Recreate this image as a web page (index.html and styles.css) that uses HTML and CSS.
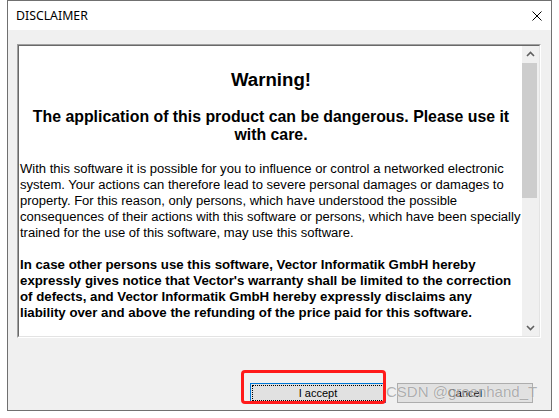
FILE: index.html
```html
<!DOCTYPE html>
<html>
<head>
<meta charset="utf-8">
<link rel="stylesheet" href="styles.css">
</head>
<body>
<div class="window">
  <div class="titlebar">
    <span class="title">DISCLAIMER</span>
    <svg class="close" width="10" height="10" viewBox="0 0 10 10"><path d="M0.5 0.5 L9.5 9.5 M9.5 0.5 L0.5 9.5" stroke="#000" stroke-width="1" fill="none"/></svg>
  </div>
  <div class="client">
    <div class="edit">
      <div class="edit-inner">
        <div class="doc">
          <h1 class="doc-title">Warning!</h1>
          <h2 class="doc-sub">The application of this product can be dangerous. Please use it<br>with care.</h2>
          <p class="para">With this software it is possible for you to influence or control a networked electronic<br>system. Your actions can therefore lead to severe personal damages or damages to<br>property. For this reason, only persons, which have understood the possible<br>consequences of their actions with this software or persons, which have been specially<br>trained for the use of this software, may use this software.</p>
          <p class="para bold">In case other persons use this software, Vector Informatik GmbH hereby<br>expressly gives notice that Vector's warranty shall be limited to the correction<br>of defects, and Vector Informatik GmbH hereby expressly disclaims any<br>liability over and above the refunding of the price paid for this software.</p>
        </div>
        <div class="scrollbar">
          <svg class="arrow" width="17" height="17" viewBox="0 0 17 17"><polyline points="5,10 8.5,6.5 12,10" fill="none" stroke="#606060" stroke-width="1.6"/></svg>
          <div class="track"><div class="thumb"></div></div>
          <svg class="arrow" width="17" height="17" viewBox="0 0 17 17"><polyline points="5,7 8.5,10.5 12,7" fill="none" stroke="#606060" stroke-width="1.6"/></svg>
        </div>
      </div>
    </div>
    <div class="buttons">
      <button class="btn btn-default"><span class="focus">I accept</span></button>
      <button class="btn">Cancel</button>
    </div>
  </div>
  <div class="annot"></div>
  <div class="watermark">CSDN @greenhand_T</div>
</div>
</body>
</html>
```
FILE: styles.css
```css
html, body {
  margin: 0;
  padding: 0;
  background: #fff;
  width: 559px;
  height: 418px;
  overflow: hidden;
}
.window {
  position: relative;
  margin-left: 7px;
  width: 543px;
  height: 409px;
  border: 1px solid #707070;
  display: flex;
  flex-direction: column;
  background: #f0f0f0;
}
.titlebar {
  height: 29px;
  background: #fff;
  display: flex;
  align-items: center;
  justify-content: space-between;
  padding: 0 9px 0 8px;
}
.title {
  font-family: "Noto Sans", "Open Sans", sans-serif;
  font-size: 12.3px;
  color: #000;
}
.close { display: block; }
.client {
  flex: 1;
  display: flex;
  flex-direction: column;
  padding: 14px 0 0 9px;
}
.edit {
  width: 522px;
  height: 292px;
  border: 1px solid;
  border-color: #a0a0a0 #fff #fff #a0a0a0;
}
.edit-inner {
  height: 290px;
  border: 1px solid;
  border-color: #696969 #e3e3e3 #e3e3e3 #696969;
  display: flex;
  background: #fff;
}
.doc {
  flex: 1;
  padding: 23px 0 0 1px;
  overflow: hidden;
  font-family: "Liberation Sans", Arial, sans-serif;
  color: #000;
}
.doc-title {
  margin: 0;
  text-align: center;
  font-size: 18.67px;
  line-height: 22px;
  font-weight: bold;
}
.doc-sub {
  margin: 17px 0 0 0;
  text-align: center;
  font-size: 15.85px;
  line-height: 18px;
  font-weight: bold;
}
.para {
  margin: 17px 0 0 0;
  font-size: 13.05px;
  line-height: 16px;
  white-space: nowrap;
}
.para.bold {
  margin-top: 16px;
  font-weight: bold;
  font-size: 13.27px;
}
.scrollbar {
  width: 17px;
  display: flex;
  flex-direction: column;
  background: #f0f0f0;
}
.arrow { display: block; flex: none; }
.track { flex: 1; }
.thumb {
  height: 135px;
  width: 15px;
  background: #cdcdcd;
}
.buttons {
  margin-top: 45px;
  display: flex;
  justify-content: flex-end;
  gap: 11px;
  padding-right: 18px;
}
.btn {
  width: 136px;
  height: 20px;
  padding: 0;
  margin: 0;
  border: 1px solid #adadad;
  background: #e1e1e1;
  font-family: "Liberation Sans", Arial, sans-serif;
  font-size: 11px;
  color: #000;
  display: flex;
  align-items: center;
  justify-content: center;
}
.btn-default {
  border: 1px solid #0078d7;
  padding: 1px;
}
.focus {
  flex: 1;
  align-self: stretch;
  border: 1px dotted #000;
  display: flex;
  align-items: center;
  justify-content: center;
}
.annot {
  position: absolute;
  left: 233px;
  top: 369px;
  width: 139px;
  height: 28px;
  border: 3px solid #ff1a1a;
  border-radius: 4px;
}
.watermark {
  position: absolute;
  left: 378px;
  top: 382px;
  font-family: "Liberation Sans", Arial, sans-serif;
  font-size: 15px;
  line-height: 17px;
  color: rgba(110, 110, 110, 0.55);
  text-shadow: 0 0 1px rgba(255,255,255,0.9);
  white-space: nowrap;
}
```
